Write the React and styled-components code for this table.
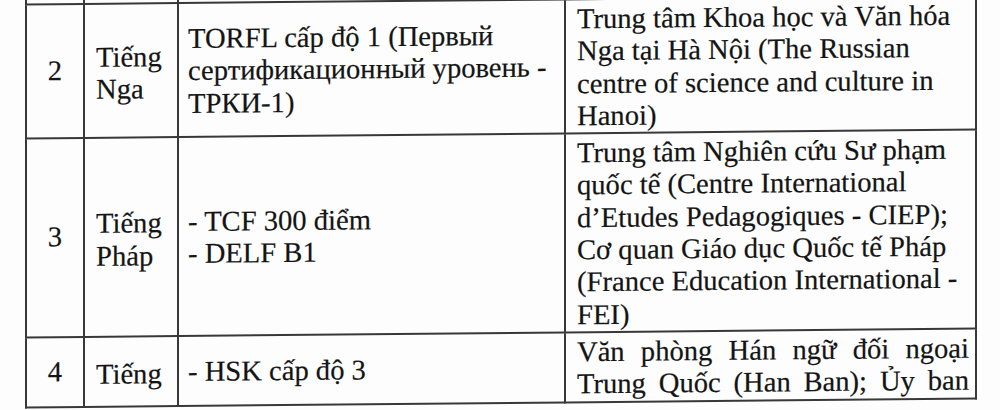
import styled, { createGlobalStyle } from 'styled-components';

const GlobalStyle = createGlobalStyle`
  html, body {
    margin: 0;
    padding: 0;
    background: #fdfdfd;
  }
`;

const rows = [
  {
    num: '2',
    lang: ['Tiếng', 'Nga'],
    cert: ['TORFL cấp độ 1 (Первый', 'сертификационный уровень -', 'ТРКИ-1)'],
    org: [
      'Trung tâm Khoa học và Văn hóa',
      'Nga tại Hà Nội (The Russian',
      'centre of science and culture in',
      'Hanoi)',
    ],
  },
  {
    num: '3',
    lang: ['Tiếng', 'Pháp'],
    cert: ['- TCF 300 điểm', '- DELF B1'],
    org: [
      'Trung tâm Nghiên cứu Sư phạm',
      'quốc tế (Centre International',
      'd’Etudes Pedagogiques - CIEP);',
      'Cơ quan Giáo dục Quốc tế Pháp',
      '(France Education International -',
      'FEI)',
    ],
  },
  {
    num: '4',
    lang: ['Tiếng'],
    cert: ['- HSK cấp độ 3'],
    org: ['Văn phòng Hán ngữ đối ngoại', 'Trung Quốc (Han Ban); Ủy ban'],
    justify: true,
  },
];

export default function App() {
  return (
    <Page>
      <GlobalStyle />
      <Sheet>
        <Table>
          <colgroup>
            <Col width={58} />
            <Col width={94} />
            <Col width={387} />
            <Col width={411} />
          </colgroup>
          <tbody>
            <StubRow>
              <Cell />
              <Cell />
              <Cell />
              <Cell />
            </StubRow>
            {rows.map((row) => (
              <tr key={row.num}>
                <Cell align="center">{row.num}</Cell>
                <Cell padLeft={11} padTop={6}>
                  {row.lang.map((l) => (
                    <Line key={l}>{l}</Line>
                  ))}
                </Cell>
                <Cell padLeft={9} padTop={3}>
                  {row.cert.map((l) => (
                    <Line key={l}>{l}</Line>
                  ))}
                </Cell>
                <Cell padLeft={11} padRight={6} padTop={3} valign="top">
                  {row.org.map((l) => (
                    <Line key={l} justify={row.justify}>
                      {l}
                    </Line>
                  ))}
                </Cell>
              </tr>
            ))}
          </tbody>
        </Table>
      </Sheet>
    </Page>
  );
}

const Page = styled.div`
  width: 1000px;
  height: 410px;
  overflow: hidden;
  background: #fdfdfd;
`;

/* the scan starts part way down the page, so the previous row is cut off */
const Sheet = styled.div`
  padding-left: 25px;
  margin-top: -20px;
`;

const Table = styled.table`
  width: 952px;
  table-layout: fixed;
  border-collapse: collapse;
  transform: skewY(-0.54deg);
  transform-origin: 476px 0;

  font-family: 'Liberation Serif', 'Times New Roman', serif;
  font-size: 28.6px;
  line-height: 32.3px;
  color: #141414;
  -webkit-text-stroke: 0.2px #141414;
`;

const Col = styled.col`
  width: ${({ width }) => width}px;
`;

const StubRow = styled.tr`
  height: 20px;

  td {
    border-top: none;
  }
`;

const Cell = styled.td`
  border: 2px solid #383838;
  padding: ${({ padTop }) => padTop || 0}px ${({ padRight }) => padRight || 0}px 0
    ${({ padLeft }) => padLeft || 0}px;
  text-align: ${({ align }) => align || 'left'};
  vertical-align: ${({ valign }) => valign || 'middle'};
  white-space: nowrap;
`;

const Line = styled.span`
  display: block;
  text-align: ${({ justify }) => (justify ? 'justify' : 'inherit')};
  text-align-last: ${({ justify }) => (justify ? 'justify' : 'auto')};
`;
